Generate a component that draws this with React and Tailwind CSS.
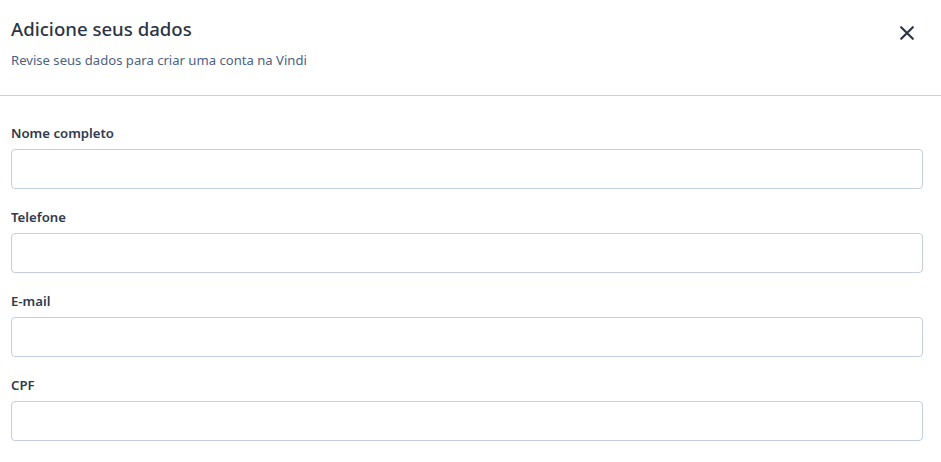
import React from "react";

const fields = ["Nome completo", "Telefone", "E-mail", "CPF"];

export default function App() {
  return (
    <div className="w-[941px] h-[462px] bg-white overflow-hidden" style={{ fontFamily: '"Noto Sans", "Open Sans", sans-serif' }}>
      <div className="flex justify-between items-start h-[96px] pl-[11px] pr-[24px] pt-[16px] border-b border-[#c6d3e1]">
        <div>
          <h1 className="text-[18.6px] leading-[26px] font-medium text-[#2b3445]">Adicione seus dados</h1>
          <p className="mt-[9px] text-[13.1px] leading-[18px] text-[#4c6283]">Revise seus dados para criar uma conta na Vindi</p>
        </div>
        <button className="mt-[7px] text-[#2b3445]">
          <svg width="20" height="20" viewBox="0 0 24 24" fill="none" stroke="currentColor" strokeWidth="2.6" strokeLinecap="round">
            <path d="M5 5L19 19M19 5L5 19" />
          </svg>
        </button>
      </div>
      <div className="pl-[11px] pr-[18px] pt-[27px] flex flex-col gap-[18px]">
        {fields.map((f) => (
          <div key={f} className="flex flex-col gap-[6px]">
            <label className="text-[13.2px] leading-[20px] font-semibold text-[#2f3a4c]">{f}</label>
            <input className="h-[40px] w-full rounded-[4px] border border-[#c3cfdc] outline-none" />
          </div>
        ))}
      </div>
    </div>
  );
}
